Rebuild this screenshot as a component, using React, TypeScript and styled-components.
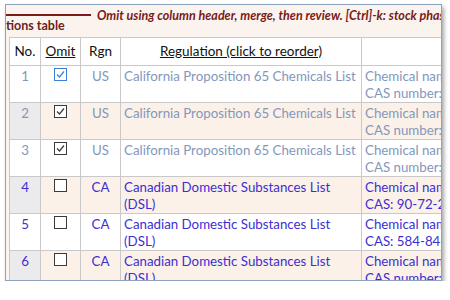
import React from "react";
import styled, { createGlobalStyle } from "styled-components";

const Global = createGlobalStyle`
  html, body {
    margin: 0;
    padding: 0;
    background: #ffffff;
  }
  body {
    font-family: "Lato", "Noto Sans", sans-serif;
  }
`;

type Row = {
  no: number;
  omit: boolean;
  focus?: boolean;
  rgn: string;
  reg: string[];
  detail: string[];
};

const rows: Row[] = [
  { no: 1, omit: true, focus: true, rgn: "US", reg: ["California Proposition 65 Chemicals List"], detail: ["Chemical name", "CAS number: 5"] },
  { no: 2, omit: true, rgn: "US", reg: ["California Proposition 65 Chemicals List"], detail: ["Chemical name", "CAS number: 5"] },
  { no: 3, omit: true, rgn: "US", reg: ["California Proposition 65 Chemicals List"], detail: ["Chemical name", "CAS number: 5"] },
  { no: 4, omit: false, rgn: "CA", reg: ["Canadian Domestic Substances List", "(DSL)"], detail: ["Chemical name", "CAS: 90-72-2"] },
  { no: 5, omit: false, rgn: "CA", reg: ["Canadian Domestic Substances List", "(DSL)"], detail: ["Chemical name", "CAS: 584-84-9"] },
  { no: 6, omit: false, rgn: "CA", reg: ["Canadian Domestic Substances List", "(DSL)"], detail: ["Chemical name", "CAS number: 5"] },
];

const Check: React.FC<{ checked: boolean; focus?: boolean }> = ({ checked, focus }) => {
  const c = focus ? "#3b7fd9" : "#3a3a3a";
  return (
    <svg width="13" height="13" viewBox="0 0 13 13">
      <rect x="0.5" y="0.5" width="12" height="12" fill="#ffffff" stroke={c} />
      {checked && <path d="M3 6.5 L5.5 9 L10 3.5" fill="none" stroke={c} strokeWidth="1.2" />}
    </svg>
  );
};

const App: React.FC = () => {
  return (
    <>
      <Global />
      <Panel>
        <Banner>
          <Rule />
          <Hint>Omit using column header, merge, then review. [Ctrl]-k: stock phase</Hint>
        </Banner>
        <Title>tions table</Title>
        <Grid>
          <colgroup>
            <col style={{ width: 31 }} />
            <col style={{ width: 40 }} />
            <col style={{ width: 40 }} />
            <col style={{ width: 241 }} />
            <col style={{ width: 140 }} />
          </colgroup>
          <thead>
            <tr>
              <Th>No.</Th>
              <Th $link>Omit</Th>
              <Th>Rgn</Th>
              <Th $link>Regulation (click to reorder)</Th>
              <Th />
            </tr>
          </thead>
          <tbody>
            {rows.map((r) => (
              <Tr key={r.no} $alt={r.no % 2 === 0}>
                <NoCell $alt={r.no % 2 === 0} $muted={r.omit}>{r.no}</NoCell>
                <CheckCell>
                  <Check checked={r.omit} focus={r.focus} />
                </CheckCell>
                <Td $muted={r.omit} $center>{r.rgn}</Td>
                <Td $muted={r.omit}>
                  {r.reg.map((l) => (
                    <Line key={l}>{l}</Line>
                  ))}
                </Td>
                <Td $muted={r.omit}>
                  {r.detail.map((l) => (
                    <Line key={l}>{l}</Line>
                  ))}
                </Td>
              </Tr>
            ))}
          </tbody>
        </Grid>
      </Panel>
    </>
  );
};

const Panel = styled.div`
  margin: 4px 0 0 5px;
  width: 437px;
  height: 277px;
  border: 1px solid #8ea2be;
  background: #fbf4ee;
  box-shadow: 2px 3px 4px rgba(0, 0, 0, 0.35);
  overflow: hidden;
  box-sizing: border-box;
`;

const Banner = styled.div`
  display: flex;
  align-items: center;
  height: 16px;
  margin-top: 2px;
  white-space: nowrap;
`;

const Rule = styled.div`
  flex: 0 0 85px;
  height: 2px;
  background: #7a1a1a;
  margin-right: 6px;
`;

const Hint = styled.span`
  font-size: 12.5px;
  font-weight: bold;
  font-style: italic;
  color: #7a1a1a;
`;

const Title = styled.div`
  margin-top: -3px;
  font-size: 12.5px;
  font-weight: bold;
  color: #6a2420;
  height: 12px;
  line-height: 12px;
`;

const Grid = styled.table`
  margin: 5px 0 0 3px;
  border-collapse: collapse;
  table-layout: fixed;
  width: 492px;
  font-size: 13.3px;
`;

const Th = styled.th<{ $link?: boolean }>`
  height: 25px;
  padding: 0 0 2px;
  background: #ffffff;
  border: 1px solid #c9c9c9;
  font-size: 13.5px;
  font-weight: normal;
  color: #111111;
  text-align: center;
  text-decoration: ${(p) => (p.$link ? "underline" : "none")};
  vertical-align: middle;
`;

const Tr = styled.tr<{ $alt: boolean }>`
  height: 37px;
  background: ${(p) => (p.$alt ? "#fbf1e8" : "#ffffff")};
`;

const Td = styled.td<{ $muted?: boolean; $center?: boolean }>`
  padding: 2px 3px 0;
  border: 1px solid #c9c9c9;
  vertical-align: top;
  color: ${(p) => (p.$muted ? "#8497bb" : "#3c2fd2")};
  text-align: ${(p) => (p.$center ? "center" : "left")};
  white-space: nowrap;
  overflow: hidden;
  line-height: 17px;
`;

const NoCell = styled(Td)<{ $alt: boolean }>`
  text-align: center;
  background: ${(p) => (p.$alt ? "#ebebee" : "#ffffff")};
`;

const CheckCell = styled.td`
  border: 1px solid #c9c9c9;
  text-align: center;
  vertical-align: top;
  padding: 2px 0 0;
  line-height: 0;
  svg {
    display: inline-block;
  }
`;

const Line = styled.div`
  white-space: nowrap;
`;

export default App;
